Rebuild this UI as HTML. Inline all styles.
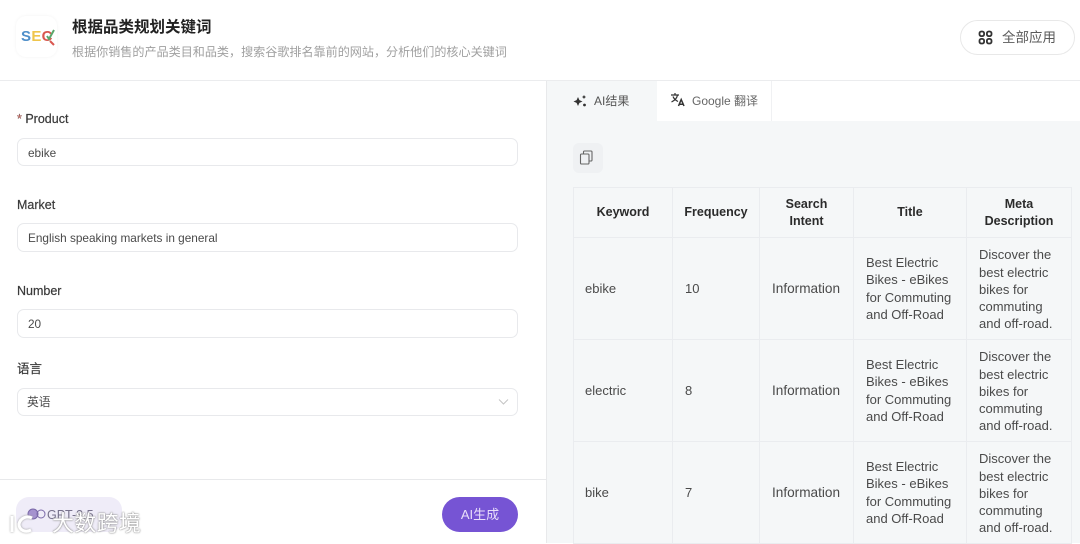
<!DOCTYPE html>
<html lang="zh"><head><meta charset="utf-8"><title>根据品类规划关键词</title>
<style>
*{box-sizing:border-box}
html,body{margin:0;padding:0}
body{width:1080px;height:543px;position:relative;overflow:hidden;background:#fff;font-family:"Liberation Sans","Noto Sans CJK SC",sans-serif;color:#333}
.a{position:absolute;white-space:nowrap}
.lbl{left:17px;font-size:12.5px;line-height:16px;color:#3a3a3a;-webkit-text-stroke:.2px #3a3a3a}
.inp{left:17px;width:501px;border:1px solid #e8e9ec;border-radius:7px;background:#fff;font-size:11.8px;color:#4a4a4a;padding-left:10px}
.c{position:absolute;border:1px solid #eaecef;display:flex;align-items:center;font-size:13px;line-height:17.2px;color:#4a4a4a;padding:0 12px}
.k{padding-left:11px}
.m{padding-top:2px}
.i{font-size:13.6px;padding-right:0}
.h{justify-content:center;text-align:center;font-weight:bold;color:#2b2b2b;font-size:12.5px;line-height:17px}
</style></head><body>
<!-- header -->
<div class="a" style="left:16px;top:16px;width:41px;height:41px;border-radius:10px;background:#fff;box-shadow:0 0 3px #f2f2f2"></div>
<div class="a" style="left:21px;top:28px;font-size:15px;line-height:18px;font-weight:bold;letter-spacing:.3px"><span style="color:#4f8fc9">S</span><span style="color:#efc54d">E</span><span style="color:#d9574f">C</span></div>
<svg class="a" style="left:44px;top:28px" width="12" height="19" viewBox="0 0 12 19"><path d="M3 8l2 3 5-9" fill="none" stroke="#5aa66a" stroke-width="2"/><path d="M6 13l4 4" stroke="#d9574f" stroke-width="2"/></svg>
<div class="a" style="left:72px;top:18px;font-size:15.5px;line-height:19px;font-weight:bold;color:#222">根据品类规划关键词</div>
<div class="a" style="left:72px;top:44px;font-size:12.08px;line-height:16px;color:#a0a0a0">根据你销售的产品类目和品类，搜索谷歌排名靠前的网站，分析他们的核心关键词</div>
<div class="a" style="left:960px;top:20px;width:115px;height:35px;border:1px solid #e8e8e8;border-radius:18px;background:#fff"></div>
<svg class="a" style="left:978px;top:30px" width="15" height="15" viewBox="0 0 15 15" fill="none" stroke="#333" stroke-width="1.8"><rect x="1.500" y="1.500" width="4.600" height="4.600" rx="1.800"/><rect x="8.900" y="1.500" width="4.600" height="4.600" rx="1.800"/><rect x="1.500" y="8.900" width="4.600" height="4.600" rx="1.800"/><rect x="8.900" y="8.900" width="4.600" height="4.600" rx="1.800"/></svg>
<div class="a" style="left:1002px;top:29px;font-size:13.5px;line-height:18px;color:#5a5a5a">全部应用</div>
<div class="a" style="left:0;top:80px;width:1080px;height:1px;background:#ebecee"></div>
<!-- left form -->
<div class="a lbl" style="left:17px;top:111px"><span style="color:#e0695f">*</span> Product</div>
<div class="a inp" style="top:138px;height:28px;line-height:28px">ebike</div>
<div class="a lbl" style="top:197px">Market</div>
<div class="a inp" style="top:223px;height:29px;line-height:28px">English speaking markets in general</div>
<div class="a lbl" style="top:283px">Number</div>
<div class="a inp" style="top:309px;height:29px;line-height:29px">20</div>
<div class="a lbl" style="top:361px">语言</div>
<div class="a inp" style="top:388px;height:28px;line-height:27px;padding-left:9px">英语</div>
<svg class="a" style="left:498px;top:398px" width="11" height="8" viewBox="0 0 11 8"><path d="M1 1.500l4.500 4.500L10 1.500" fill="none" stroke="#c4c4c4" stroke-width="1"/></svg>
<div class="a" style="left:0;top:479px;width:546px;height:1px;background:#e8e9eb"></div>
<div class="a" style="left:16px;top:497px;width:106px;height:35px;border-radius:13px;background:#efecf8"></div>
<svg class="a" style="left:26px;top:506px" width="22" height="16" viewBox="0 0 22 16" fill="#a592cf" stroke="#7a68a8"><circle cx="7" cy="8" r="5"/><circle cx="15" cy="8" r="4" fill="none"/></svg>
<div class="a" style="left:47px;top:507px;font-size:12.500px;line-height:16px;color:#77728c">GPT-3.5</div>
<div class="a" style="left:442px;top:497px;width:76px;height:35px;border-radius:18px;background:#7654d4;color:#e9defa;font-size:13px;line-height:35px;text-align:center">AI生成</div>
<!-- watermark -->
<svg class="a" style="left:8px;top:510px;filter:drop-shadow(0 0 1px #999)" width="44" height="26" viewBox="0 0 44 26" fill="none" stroke="#fff" stroke-width="3"><path d="M4 6v16"/><path d="M24 8a9 9 0 0 0-13 6c0 6 6 9 12 6"/></svg>
<div class="a" style="left:52px;top:510px;font-size:22px;line-height:27px;color:#fff;text-shadow:0 0 1px #777,0 0 2px #999;letter-spacing:.3px">大数跨境</div>
<!-- right -->
<div class="a" style="left:546px;top:81px;width:1px;height:462px;background:#e8e9eb"></div>
<div class="a" style="left:547px;top:81px;width:533px;height:462px;background:#f5f7f8"></div>
<div class="a" style="left:657px;top:81px;width:423px;height:40px;background:#fff"></div>
<div class="a" style="left:771px;top:81px;width:1px;height:40px;background:#f0f1f3"></div>
<svg class="a" style="left:572px;top:93px" width="16" height="16" viewBox="0 0 16 16" fill="#333"><path d="M6 4l1.400 3.100L10.500 8.500 7.400 9.900 6 13 4.600 9.900 1.500 8.500 4.600 7.100z"/><path d="M12 2l.7 1.300 1.300.7-1.300.7-.7 1.300-.7-1.300L10 4l1.300-.7z"/><circle cx="12.500" cy="12" r="1.400"/></svg>
<div class="a" style="left:594px;top:93px;font-size:12px;line-height:16px;color:#555">AI结果</div>
<svg class="a" style="left:670px;top:92px" width="16" height="16" viewBox="0 0 16 16" fill="none" stroke="#333" stroke-width="1.200"><path d="M1 3h8M5 1v2M7.500 3C7 6 4.500 8.500 1.500 10M3 4.500c1 2.500 3 4 5 5"/><path d="M8.500 14l2.700-6.500L14 14M9.500 12.300h3.500" stroke-width="1.500"/></svg>
<div class="a" style="left:692px;top:93px;font-size:12px;line-height:16px;color:#666">Google 翻译</div>
<div class="a" style="left:573px;top:143px;width:30px;height:30px;border-radius:6px;background:#eff1f3"></div>
<svg class="a" style="left:579px;top:150px" width="15" height="15" viewBox="0 0 15 15" fill="none" stroke="#666" stroke-width="1.100"><rect x="1.500" y="4" width="8.500" height="10" rx="1"/><path d="M4.500 4V2a1 1 0 0 1 1-1H12a1 1 0 0 1 1 1v8a1 1 0 0 1-1 1h-2"/></svg>
<!-- table head -->
<div class="c h" style="left:573px;top:187px;width:100px;height:51px">Keyword</div>
<div class="c h" style="left:672px;top:187px;width:88px;height:51px;padding:0">Frequency</div>
<div class="c h" style="left:759px;top:187px;width:95px;height:51px">Search<br>Intent</div>
<div class="c h" style="left:853px;top:187px;width:114px;height:51px">Title</div>
<div class="c h" style="left:966px;top:187px;width:106px;height:51px;padding:0">Meta<br>Description</div>
<!-- row 1 -->
<div class="c k" style="left:573px;top:237px;width:100px;height:103px">ebike</div>
<div class="c" style="left:672px;top:237px;width:88px;height:103px">10</div>
<div class="c i" style="left:759px;top:237px;width:95px;height:103px">Information</div>
<div class="c" style="left:853px;top:237px;width:114px;height:103px">Best Electric<br>Bikes - eBikes<br>for Commuting<br>and Off-Road</div>
<div class="c m" style="left:966px;top:237px;width:106px;height:103px">Discover the<br>best electric<br>bikes for<br>commuting<br>and off-road.</div>
<!-- row 2 -->
<div class="c k" style="left:573px;top:339px;width:100px;height:103px">electric</div>
<div class="c" style="left:672px;top:339px;width:88px;height:103px">8</div>
<div class="c i" style="left:759px;top:339px;width:95px;height:103px">Information</div>
<div class="c" style="left:853px;top:339px;width:114px;height:103px">Best Electric<br>Bikes - eBikes<br>for Commuting<br>and Off-Road</div>
<div class="c m" style="left:966px;top:339px;width:106px;height:103px">Discover the<br>best electric<br>bikes for<br>commuting<br>and off-road.</div>
<!-- row 3 -->
<div class="c k" style="left:573px;top:441px;width:100px;height:103px">bike</div>
<div class="c" style="left:672px;top:441px;width:88px;height:103px">7</div>
<div class="c i" style="left:759px;top:441px;width:95px;height:103px">Information</div>
<div class="c" style="left:853px;top:441px;width:114px;height:103px">Best Electric<br>Bikes - eBikes<br>for Commuting<br>and Off-Road</div>
<div class="c m" style="left:966px;top:441px;width:106px;height:103px">Discover the<br>best electric<br>bikes for<br>commuting<br>and off-road.</div>
</body></html>
